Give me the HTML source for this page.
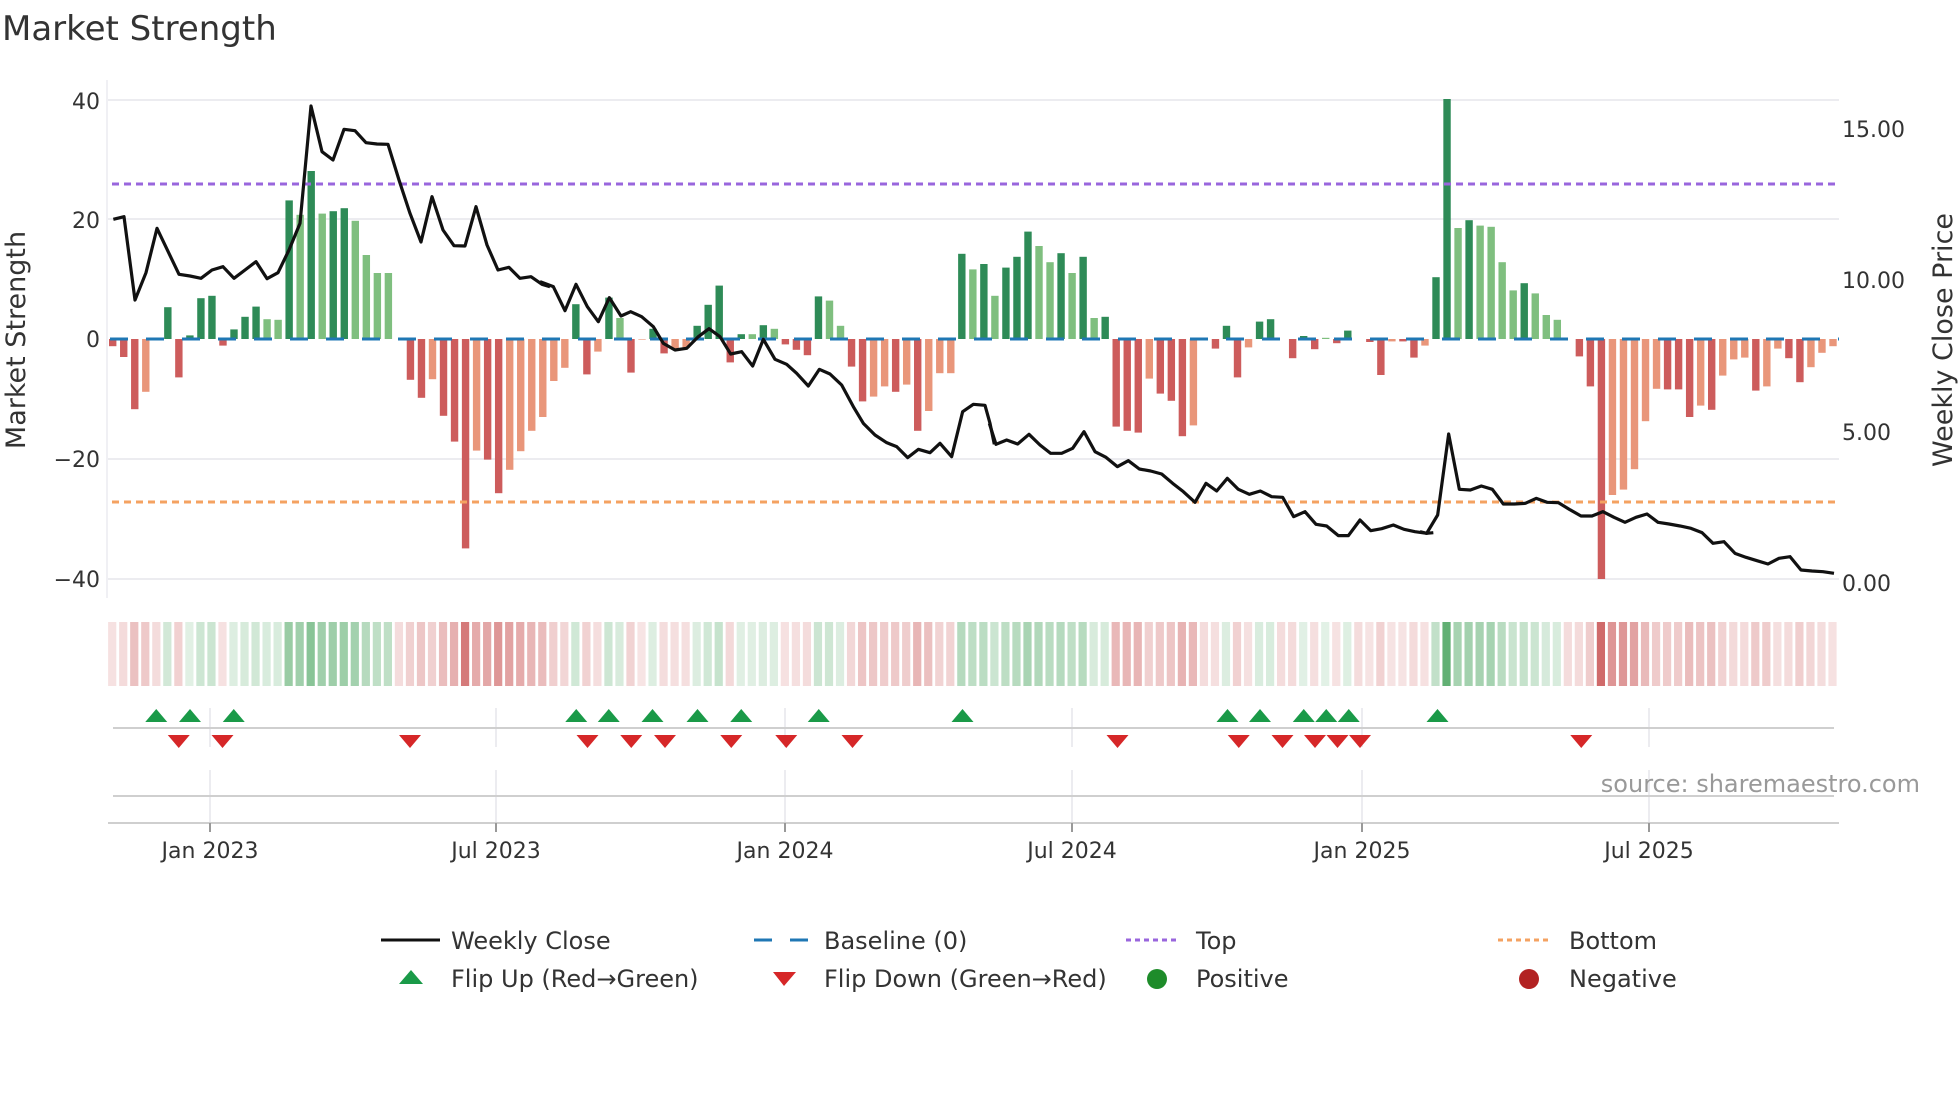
<!DOCTYPE html>
<html><head><meta charset="utf-8"><style>
html,body{margin:0;padding:0;background:#fff;}
svg{display:block;font-family:"DejaVu Sans","Liberation Sans",sans-serif;}
</style></head><body>
<svg id="s" width="1960" height="1102" viewBox="0 0 1960 1102" xmlns="http://www.w3.org/2000/svg">
<text x="2" y="40" font-size="34" fill="#333">Market Strength</text>
<g stroke="#ececf0" stroke-width="2">
<line x1="108" y1="100" x2="1839" y2="100"/>
<line x1="108" y1="219" x2="1839" y2="219"/>
<line x1="108" y1="459" x2="1839" y2="459"/>
<line x1="108" y1="579" x2="1839" y2="579"/>
</g>
<line x1="107" y1="80" x2="107" y2="598" stroke="#ececf0" stroke-width="1.5"/>
<g font-size="22" fill="#333" text-anchor="end">
<text x="100" y="109">40</text><text x="100" y="228">20</text><text x="100" y="347">0</text>
<text x="100" y="467">−20</text><text x="100" y="587">−40</text>
</g>
<g font-size="22" fill="#333">
<text x="1842" y="137">15.00</text><text x="1842" y="288">10.00</text>
<text x="1842" y="440">5.00</text><text x="1842" y="591">0.00</text>
</g>
<text transform="translate(25,340) rotate(-90)" font-size="27" fill="#333" text-anchor="middle">Market Strength</text>
<text transform="translate(1952,340) rotate(-90)" font-size="27" fill="#333" text-anchor="middle">Weekly Close Price</text>
<g id="bars"></g>
<line x1="110" y1="339" x2="1839" y2="339" stroke="#1f77b4" stroke-width="3" stroke-dasharray="18 18"/>
<line x1="112" y1="184" x2="1839" y2="184" stroke="#9966dd" stroke-width="3" stroke-dasharray="7 5"/>
<line x1="112" y1="502" x2="1839" y2="502" stroke="#f4a261" stroke-width="3" stroke-dasharray="7 5"/>
<g fill="none" stroke="#111" stroke-width="3.2" stroke-linejoin="round">
<polyline vector-effect="non-scaling-stroke" transform="translate(100,90) scale(0.33333)" points="40,388 72,380 105,630 138,548 171,415 237,553 270,558 303,565 336,540 369,530 402,565 435,540 468,515 501,566 534,548 567,480 600,400 633,48 666,185 699,210 732,118 765,122 798,158 831,162 864,163 897,270 930,370 963,456 996,320 1029,420 1062,467 1095,468 1128,350 1161,465 1194,540 1227,532 1260,565 1293,560 1326,583 1350,590"/>
<polyline vector-effect="non-scaling-stroke" transform="translate(540,90) scale(0.33333)" points="0,575 40,590 75,662 108,583 142,650 175,695 208,623 243,678 272,665 305,680 340,710 370,760 405,780 440,775 475,740 507,716 540,740 572,792 605,785 638,828 670,748 705,808 740,823 770,850 805,888 838,838 870,852 905,885 940,950 970,1000 1005,1035 1040,1058 1070,1070 1103,1103 1135,1078 1170,1088 1200,1060 1235,1100 1268,965 1300,943 1335,946 1350,1000 1363,1063"/>
<polyline vector-effect="non-scaling-stroke" transform="translate(980,90) scale(0.33333)" points="28,1000 48,1063 80,1050 113,1062 147,1033 180,1065 212,1090 245,1090 278,1075 312,1025 345,1085 378,1102 412,1130 445,1112 478,1137 512,1143 545,1152 578,1180 610,1205 645,1237 678,1180 710,1203 742,1165 775,1198 808,1213 841,1203 875,1220 908,1222 941,1280 975,1265 1008,1303 1040,1308 1075,1337 1105,1337 1140,1290 1172,1322 1205,1316 1240,1305 1272,1318 1305,1325 1340,1330 1360,1328"/>
<polyline vector-effect="non-scaling-stroke" transform="translate(1420,90) scale(0.33333)" points="0,1325 20,1330 53,1275 86,1032 118,1198 151,1200 184,1188 217,1198 250,1242 283,1242 316,1240 349,1225 382,1237 415,1238 448,1258 483,1278 516,1278 549,1265 582,1282 615,1297 648,1282 681,1272 714,1297 747,1302 780,1308 813,1315 846,1328 879,1360 912,1355 945,1390 978,1402 1011,1412 1044,1422 1077,1405 1110,1400 1143,1440 1176,1443 1209,1445 1242,1450"/>
</g>
<g id="strip"></g>
<g stroke="#e6e6ea" stroke-width="1.5">
<line x1="210" y1="708" x2="210" y2="747"/><line x1="496" y1="708" x2="496" y2="747"/><line x1="785" y1="708" x2="785" y2="747"/><line x1="1072" y1="708" x2="1072" y2="747"/><line x1="1362" y1="708" x2="1362" y2="747"/><line x1="1649" y1="708" x2="1649" y2="747"/>
<line x1="210" y1="770" x2="210" y2="823"/><line x1="496" y1="770" x2="496" y2="823"/><line x1="785" y1="770" x2="785" y2="823"/><line x1="1072" y1="770" x2="1072" y2="823"/><line x1="1362" y1="770" x2="1362" y2="823"/><line x1="1649" y1="770" x2="1649" y2="823"/>
</g>
<line x1="113" y1="728" x2="1834" y2="728" stroke="#cfcfcf" stroke-width="2"/>
<line x1="113" y1="796" x2="1834" y2="796" stroke="#cfcfcf" stroke-width="2"/>
<line x1="108" y1="823" x2="1839" y2="823" stroke="#cfcfcf" stroke-width="2"/>
<g stroke="#999" stroke-width="2">
<line x1="210" y1="823" x2="210" y2="832"/><line x1="496" y1="823" x2="496" y2="832"/><line x1="785" y1="823" x2="785" y2="832"/><line x1="1072" y1="823" x2="1072" y2="832"/><line x1="1362" y1="823" x2="1362" y2="832"/><line x1="1649" y1="823" x2="1649" y2="832"/>
</g>
<g id="tri"></g>
<g font-size="22" fill="#333" text-anchor="middle">
<text x="210" y="858">Jan 2023</text><text x="496" y="858">Jul 2023</text><text x="785" y="858">Jan 2024</text>
<text x="1072" y="858">Jul 2024</text><text x="1362" y="858">Jan 2025</text><text x="1649" y="858">Jul 2025</text>
</g>
<text x="1920" y="792" font-size="24" fill="#999" text-anchor="end">source: sharemaestro.com</text>
<line x1="381" y1="940" x2="440" y2="940" stroke="#111" stroke-width="3"/>
<line x1="754" y1="940" x2="808" y2="940" stroke="#1f77b4" stroke-width="3" stroke-dasharray="18 18"/>
<line x1="1126" y1="940" x2="1180" y2="940" stroke="#9966dd" stroke-width="3" stroke-dasharray="5 4"/>
<line x1="1498" y1="940" x2="1552" y2="940" stroke="#f4a261" stroke-width="3" stroke-dasharray="5 4"/>
<polygon points="399,984 423,984 411,970" fill="#1a9a48"/>
<polygon points="773,972 796,972 784,986" fill="#d62728"/>
<circle cx="1157" cy="979" r="10" fill="#1e8c2a"/>
<circle cx="1529" cy="979" r="10" fill="#b22222"/>
<g font-size="24" fill="#333">
<text x="451" y="949">Weekly Close</text><text x="824" y="949">Baseline (0)</text><text x="1196" y="949">Top</text><text x="1569" y="949">Bottom</text>
<text x="451" y="987">Flip Up (Red→Green)</text><text x="824" y="987">Flip Down (Green→Red)</text><text x="1196" y="987">Positive</text><text x="1569" y="987">Negative</text>
</g>
</svg>
<script>
var D="D",L="L",R="R",S="S";
var data=[[R,-1.2],[R,-3],[R,-11.7],[S,-8.8],[D,0],[D,5.3],[R,-6.4],[D,0.6],[D,6.8],[D,7.2],[R,-1.1],[D,1.6],[D,3.7],[D,5.4],[L,3.3],[L,3.2],[D,23.1],[L,20.7],[D,28],[L,20.9],[D,21.3],[D,21.8],[L,19.7],[L,14],[L,11],[L,11],[R,0],[R,-6.8],[R,-9.8],[S,-6.7],[R,-12.8],[R,-17.1],[R,-34.9],[S,-18.6],[R,-20.1],[R,-25.7],[S,-21.8],[S,-18.7],[S,-15.3],[S,-13],
[S,-7],[S,-4.8],[D,5.8],[R,-5.9],[S,-2.1],[D,6.9],[L,3.5],[R,-5.6],[S,-0.1],[D,1.7],[R,-2.4],[S,-1.6],[S,-1.5],[D,2.2],[D,5.7],[D,8.9],[R,-3.9],[D,0.8],[L,0.8],[D,2.3],[L,1.7],[R,-0.9],[R,-1.8],[R,-2.7],[D,7.1],[L,6.4],[L,2.2],[R,-4.6],[R,-10.4],[S,-9.6],[S,-7.9],[R,-8.8],[S,-7.6],[R,-15.3],[S,-12],[S,-5.7],[S,-5.7],[D,14.2],[L,11.6],[D,12.5],
[L,7.2],[D,11.9],[D,13.7],[D,17.9],[L,15.5],[L,12.8],[D,14.3],[L,11],[D,13.7],[L,3.5],[D,3.7],[R,-14.6],[R,-15.3],[R,-15.6],[S,-6.6],[R,-9.1],[R,-10.3],[R,-16.2],[S,-14.4],[R,0],[R,-1.6],[D,2.2],[R,-6.4],[S,-1.4],[D,2.9],[D,3.3],[R,0],[R,-3.2],[D,0.5],[R,-1.7],[L,0.2],[R,-0.7],[D,1.4],[R,0],[R,-0.5],[R,-6],[S,-0.4],[R,-0.4],[R,-3.1],[S,-1.1],
[D,10.3],[D,40],[L,18.5],[D,19.8],[L,18.9],[L,18.7],[L,12.8],[L,8.1],[D,9.3],[L,7.6],[L,4],[L,3.2],[R,0],[R,-2.9],[R,-7.9],[R,-40],[S,-26],[S,-25.1],[S,-21.7],[S,-13.7],[S,-8.3],[R,-8.4],[R,-8.4],[R,-13],[S,-11.1],[R,-11.8],[S,-6.1],[S,-3.4],[S,-3.1],[R,-8.6],[S,-7.9],[S,-1.6],[R,-3.2],[R,-7.2],[S,-4.7],[S,-2.3],[S,-1.2]];
var col={D:"#2e8b57",L:"#7fbf7f",R:"#cd5c5c",S:"#e9967a"};
var ns="http://www.w3.org/2000/svg",bars=document.getElementById("bars"),strip=document.getElementById("strip");
function mk(p,t,a){var e=document.createElementNS(ns,t);for(var k in a)e.setAttribute(k,a[k]);p.appendChild(e);return e;}
var n=data.length,x0=112.7,dx=(1833-112.7)/(n-1);
for(var i=0;i<n;i++){var c=x0+dx*i,v=data[i][1],h=Math.abs(v)*6;
 if(h>0.3)mk(bars,"rect",{x:c-3.7,y:v>0?339-h:339,width:7.4,height:h,fill:col[data[i][0]]});
 var a=Math.min(1,0.18+Math.abs(v)/40*0.82);
 var f=v>0?"rgba(46,150,70,"+(a*0.75)+")":"rgba(200,80,80,"+(a*0.85)+")";
 if(v==0)f="rgba(200,80,80,0.2)";
 mk(strip,"rect",{x:c-4.6,y:622,width:8.2,height:64,fill:f});
}
var tri=document.getElementById("tri");
[125,152,187,461,487,522,558,593,655,770,982,1008,1043,1061,1079,1150].forEach(function(u){var x=u*1.25;mk(tri,"polygon",{points:(x-11)+",722 "+(x+11)+",722 "+x+",709",fill:"#1a9a48"});});
[143,178,328,470,505,532,585,629,682,894,991,1026,1052,1070,1088,1265].forEach(function(u){var x=u*1.25;mk(tri,"polygon",{points:(x-11)+",735 "+(x+11)+",735 "+x+",748",fill:"#d62728"});});
</script>
</body></html>
